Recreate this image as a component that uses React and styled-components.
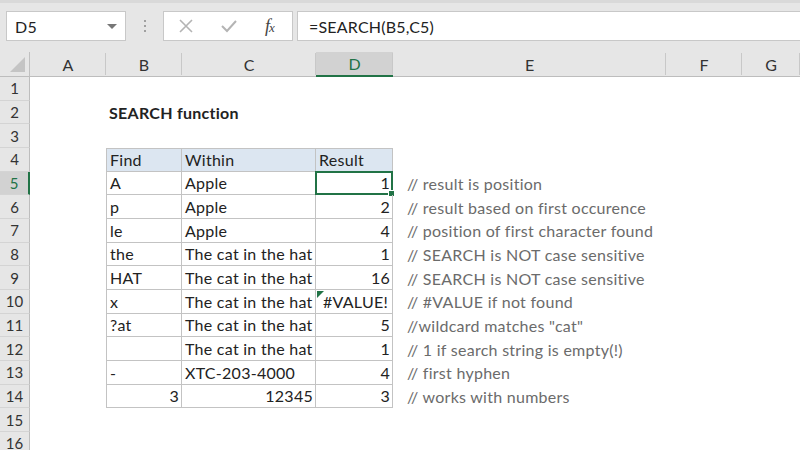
import React from 'react';
import styled, { createGlobalStyle } from 'styled-components';

const GlobalStyle = createGlobalStyle`
  html, body {
    margin: 0;
    padding: 0;
    background: #ffffff;
    overflow: hidden;
  }
`;

const GREEN = '#217346';

const Window = styled.div`
  width: 800px;
  height: 450px;
  overflow: hidden;
  font-family: Lato, "Liberation Sans", sans-serif;
  color: #222;
`;

const Toolbar = styled.div`
  height: 52px;
  box-sizing: border-box;
  background: #e6e6e6;
  border-top: 3px solid #d9d9d9;
  display: flex;
  align-items: flex-start;
  padding: 8px 0 0 6px;
`;

const NameBox = styled.div`
  width: 120px;
  height: 30px;
  box-sizing: border-box;
  background: #fff;
  border: 1px solid #c8c8c8;
  display: flex;
  align-items: center;
  justify-content: space-between;
  padding: 0 8px;
  font-size: 16px;
  letter-spacing: 0.3px;
  color: #222;
`;

const DropArrow = styled.span`
  width: 0;
  height: 0;
  border-left: 5px solid transparent;
  border-right: 5px solid transparent;
  border-top: 5px solid #777;
`;

const Grip = styled.div`
  width: 37px;
  height: 30px;
  display: flex;
  flex-direction: column;
  align-items: center;
  justify-content: center;
  gap: 3px;
`;

const Dot = styled.span`
  width: 2px;
  height: 2px;
  background: #a0a0a0;
`;

const FxBox = styled.div`
  width: 130px;
  height: 30px;
  box-sizing: border-box;
  background: #fff;
  border: 1px solid #c8c8c8;
  display: flex;
  align-items: center;
  padding-left: 15px;
  gap: 28px;
`;

const Fx = styled.span`
  font-family: "Liberation Serif", "DejaVu Serif", serif;
  font-style: italic;
  font-size: 18px;
  color: #444;
  letter-spacing: -1px;
  small {
    font-size: 13px;
  }
`;

const FormulaBar = styled.div`
  flex: 1;
  height: 30px;
  margin-left: 4px;
  box-sizing: border-box;
  background: #fff;
  border: 1px solid #c8c8c8;
  border-right: none;
  display: flex;
  align-items: center;
  padding-left: 11px;
  font-size: 16px;
  letter-spacing: 0.2px;
  color: #222;
`;

const Sheet = styled.div`
  display: grid;
  grid-template-columns: 30px 76px 76px 134px 77px 273px 76px 1fr;
  grid-template-rows: 25px repeat(16, 23.67px);
  background: #fff;
`;

const Corner = styled.div`
  position: relative;
  background: #e6e6e6;
  border-right: 1px solid #c0c0c0;
  border-bottom: 1px solid #bdbdbd;
  box-sizing: border-box;
  &::after {
    content: '';
    position: absolute;
    right: 4px;
    bottom: 4px;
    width: 0;
    height: 0;
    border-left: 15px solid transparent;
    border-bottom: 15px solid #c4c4c4;
  }
`;

const ColHead = styled.div`
  box-sizing: border-box;
  display: flex;
  align-items: center;
  justify-content: center;
  font-size: 16px;
  background: ${p => (p.$active ? '#d2d2d2' : '#e6e6e6')};
  color: ${p => (p.$active ? GREEN : '#333')};
  border-bottom: ${p => (p.$active ? `2px solid ${GREEN}` : '1px solid #bdbdbd')};
  position: relative;
  &::after {
    content: '';
    position: absolute;
    right: 0;
    top: 1px;
    bottom: 1px;
    width: 1px;
    background: #c8c8c8;
  }
`;

const RowHead = styled.div`
  box-sizing: border-box;
  display: flex;
  align-items: center;
  justify-content: center;
  font-size: 15px;
  background: ${p => (p.$active ? '#d2d2d2' : '#e6e6e6')};
  color: ${p => (p.$active ? GREEN : '#333')};
  border-right: ${p => (p.$active ? `2px solid ${GREEN}` : '1px solid #bdbdbd')};
  border-bottom: 1px solid #d4d4d4;
`;

const Cell = styled.div`
  position: relative;
  box-sizing: border-box;
  display: flex;
  align-items: center;
  justify-content: ${p => (p.$right ? 'flex-end' : 'flex-start')};
  padding: 0 ${p => (p.$right ? '2px' : '0')} 0 ${p => (p.$comment ? '14px' : '3px')};
  font-size: 16px;
  letter-spacing: 0.27px;
  white-space: nowrap;
  overflow: visible;
  font-weight: ${p => (p.$bold ? 700 : 400)};
  color: ${p => (p.$comment ? '#6b6b6b' : '#222')};
  background: ${p => (p.$head ? '#dce6f1' : 'transparent')};
  border-right: ${p => (p.$table ? '1px solid #c3c3c3' : 'none')};
  border-bottom: ${p => (p.$table ? '1px solid #c3c3c3' : 'none')};
  border-left: ${p => (p.$first ? '1px solid #c3c3c3' : 'none')};
  border-top: ${p => (p.$top ? '1px solid #c3c3c3' : 'none')};
  z-index: ${p => (p.$comment || p.$bold ? 1 : 0)};
`;

const Selection = styled.div`
  position: absolute;
  left: -1px;
  top: -1px;
  right: -1px;
  bottom: -1px;
  border: 2px solid ${GREEN};
  pointer-events: none;
  &::after {
    content: '';
    position: absolute;
    right: -4px;
    bottom: -4px;
    width: 5px;
    height: 5px;
    background: ${GREEN};
    border: 1px solid #fff;
  }
`;

const ErrorFlag = styled.span`
  position: absolute;
  left: 1px;
  top: 1px;
  width: 0;
  height: 0;
  border-top: 7px solid ${GREEN};
  border-right: 7px solid transparent;
`;

const ErrorText = styled.span`
  margin: 0 auto;
`;

const columns = ['A', 'B', 'C', 'D', 'E', 'F', 'G'];

const rows = [
  ['A', 'Apple', 1, '// result is position'],
  ['p', 'Apple', 2, '// result based on first occurence'],
  ['le', 'Apple', 4, '// position of first character found'],
  ['the', 'The cat in the hat', 1, '// SEARCH is NOT case sensitive'],
  ['HAT', 'The cat in the hat', 16, '// SEARCH is NOT case sensitive'],
  ['x', 'The cat in the hat', '#VALUE!', '// #VALUE if not found'],
  ['?at', 'The cat in the hat', 5, '//wildcard matches "cat"'],
  ['', 'The cat in the hat', 1, '// 1 if search string is empty(!)'],
  ['-', 'XTC-203-4000', 4, '// first hyphen'],
  [3, 12345, 3, '// works with numbers'],
];

const CrossIcon = () => (
  <svg width="14" height="14" viewBox="0 0 14 14">
    <path d="M1 1 L13 13 M13 1 L1 13" stroke="#b4b4b4" strokeWidth="1.6" fill="none" />
  </svg>
);

const CheckIcon = () => (
  <svg width="16" height="14" viewBox="0 0 16 14">
    <path d="M1 7 L6 12 L15 2" stroke="#b4b4b4" strokeWidth="2" fill="none" />
  </svg>
);

const isNum = v => typeof v === 'number';

const renderRow = n => {
  if (n === 2) {
    return [
      <Cell key="A2" />,
      <Cell key="B2" $bold>SEARCH function</Cell>,
      ...columns.slice(2).map(c => <Cell key={`${c}2`} />),
    ];
  }
  if (n === 4) {
    return [
      <Cell key="A4" />,
      <Cell key="B4" $table $head $first $top>Find</Cell>,
      <Cell key="C4" $table $head $top>Within</Cell>,
      <Cell key="D4" $table $head $top>Result</Cell>,
      <Cell key="E4" />,
      <Cell key="F4" />,
      <Cell key="G4" />,
    ];
  }
  if (n >= 5 && n <= 14) {
    const [find, within, result, note] = rows[n - 5];
    const isError = result === '#VALUE!';
    return [
      <Cell key={`A${n}`} />,
      <Cell key={`B${n}`} $table $first $right={isNum(find)}>{find}</Cell>,
      <Cell key={`C${n}`} $table $right={isNum(within)}>{within}</Cell>,
      <Cell key={`D${n}`} $table $right={isNum(result)}>
        {isError && <ErrorFlag />}
        {isError ? <ErrorText>{result}</ErrorText> : result}
        {n === 5 && <Selection />}
      </Cell>,
      <Cell key={`E${n}`} $comment>{note}</Cell>,
      <Cell key={`F${n}`} />,
      <Cell key={`G${n}`} />,
    ];
  }
  return columns.map(c => <Cell key={`${c}${n}`} />);
};

const App = () => (
  <Window>
    <GlobalStyle />
    <Toolbar>
      <NameBox>
        D5
        <DropArrow />
      </NameBox>
      <Grip>
        <Dot />
        <Dot />
        <Dot />
      </Grip>
      <FxBox>
        <CrossIcon />
        <CheckIcon />
        <Fx>f<small>x</small></Fx>
      </FxBox>
      <FormulaBar>=SEARCH(B5,C5)</FormulaBar>
    </Toolbar>
    <Sheet>
      <Corner />
      {columns.map(c => (
        <ColHead key={c} $active={c === 'D'}>{c}</ColHead>
      ))}
      {Array.from({ length: 16 }, (_, i) => i + 1).map(n => (
        <React.Fragment key={n}>
          <RowHead $active={n === 5}>{n}</RowHead>
          {renderRow(n)}
        </React.Fragment>
      ))}
    </Sheet>
  </Window>
);

export default App;
